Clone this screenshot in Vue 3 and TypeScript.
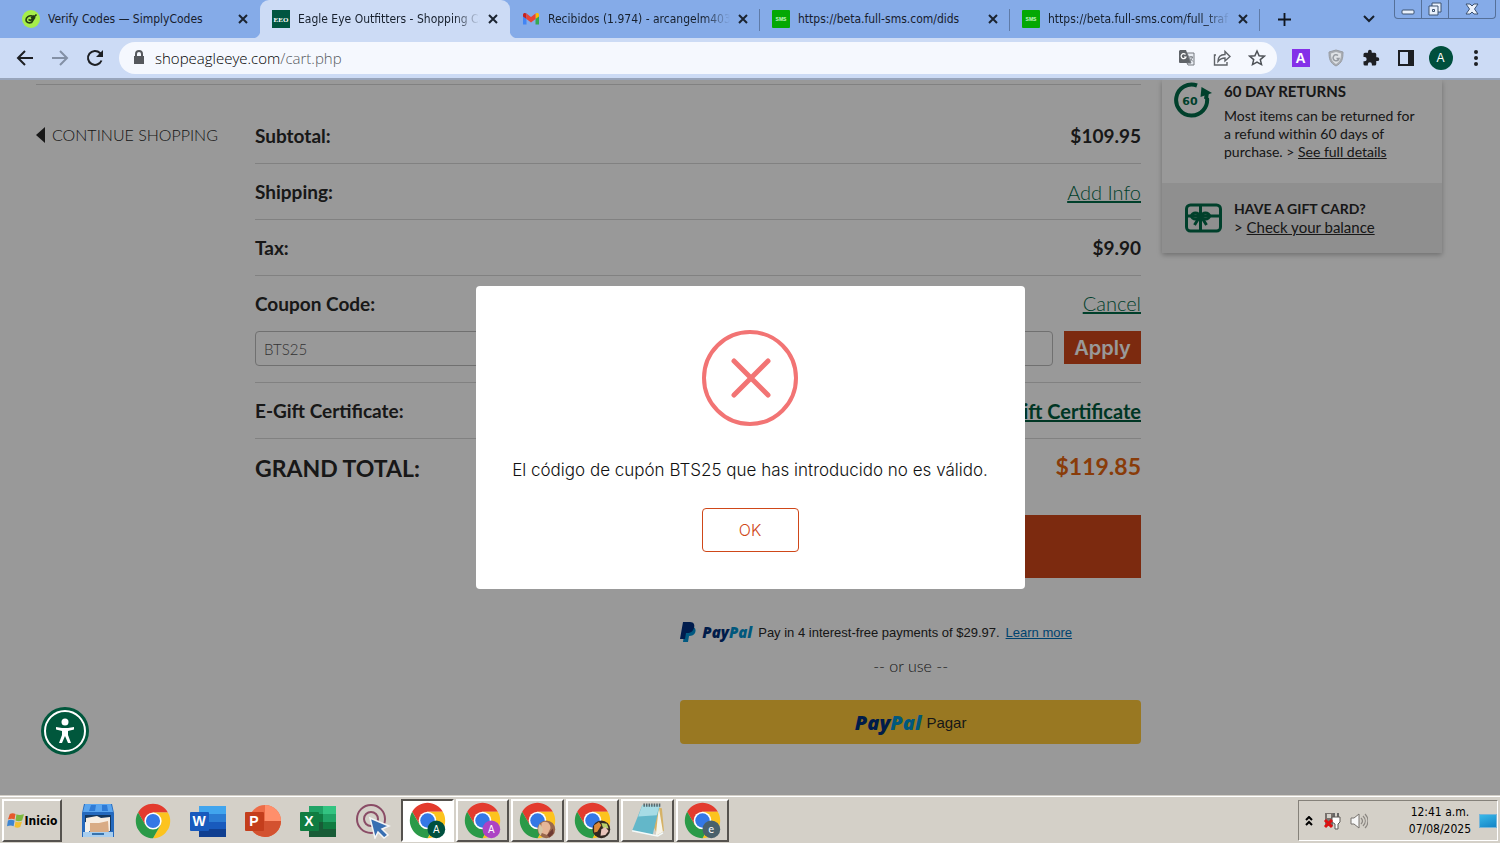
<script setup lang="ts">
import { ref } from 'vue'

interface Tab { title: string; icon: 'codes' | 'eeo' | 'gmail' | 'sms'; active?: boolean; cut?: boolean }
interface Task { name: string; badge?: string; kind: string; active?: boolean }

const tabs: Tab[] = [
  { title: 'Verify Codes — SimplyCodes', icon: 'codes' },
  { title: 'Eagle Eye Outfitters - Shopping Ca', icon: 'eeo', active: true, cut: true },
  { title: 'Recibidos (1.974) - arcangelm403', icon: 'gmail', cut: true },
  { title: 'https://beta.full-sms.com/dids', icon: 'sms' },
  { title: 'https://beta.full-sms.com/full_traf', icon: 'sms', cut: true },
]

const tasks: Task[] = [
  { name: 'Chrome A', kind: 'green', badge: 'A', active: true },
  { name: 'Chrome A 2', kind: 'purple', badge: 'A' },
  { name: 'Chrome photo', kind: 'photo' },
  { name: 'Chrome photo 2', kind: 'photo2' },
  { name: 'Notepad', kind: 'notepad' },
  { name: 'Chrome e', kind: 'slate', badge: 'e' },
]

const launchers = ['Files', 'Chrome', 'Word', 'PowerPoint', 'Excel', 'Clicker']
const coupon = ref('BTS25')
</script>

<template>
  <div class="screen">
    <header class="browser">
      <div class="tabstrip">
        <div v-for="tab in tabs" :key="tab.title" class="tab" :class="{ active: tab.active }">
          <svg v-if="tab.icon === 'codes'" class="favicon" viewBox="0 0 18 18">
            <circle cx="9" cy="9" r="9" fill="#a6ee4b" />
            <path d="M10.500 6C7 5 4 7.500 4 10s3 3.500 5.500 2.500L13 7M6.500 9.500l2 1L14.500 4.500M9 8l3-2.500" fill="none" stroke="#223b12" stroke-width="1.600" />
          </svg>
          <svg v-else-if="tab.icon === 'eeo'" class="favicon" viewBox="0 0 18 18">
            <path d="M0 0h18v18H0z" fill="#005540" />
            <text x="9" y="12" text-anchor="middle" class="eeo-text">EEO</text>
          </svg>
          <svg v-else-if="tab.icon === 'gmail'" class="favicon" viewBox="0 0 18 18">
            <path d="M1 5v9.500h3.500V8z" fill="#4285f4" />
            <path d="M17 5v9.500h-3.500V8z" fill="#34a853" />
            <path d="M1 6.500V4.500C1 3 3 2.500 4.500 3.500V9z" fill="#c5221f" />
            <path d="M17 6.500V4.500C17 3 15 2.500 13.500 3.500V9z" fill="#fbbc04" />
            <path d="M4.500 3.500 9 7l4.500-3.500V9L9 12.500 4.500 9z" fill="#ea4335" />
          </svg>
          <svg v-else class="favicon" viewBox="0 0 18 18">
            <rect width="18" height="18" rx="1" fill="#04a804" />
            <text x="9" y="11" text-anchor="middle" class="sms-text">SMS</text>
          </svg>
          <span class="tab-title" :class="{ cut: tab.cut }">{{ tab.title }}</span>
          <button class="tab-close" :aria-label="'Close ' + tab.title">
            <svg viewBox="0 0 10 10"><path d="M1 1l8 8M9 1 1 9" /></svg>
          </button>
        </div>
        <button class="new-tab" aria-label="New tab">
          <svg viewBox="0 0 14 14"><path d="M7 0v14M0 7h14" /></svg>
        </button>
        <button class="tab-search" aria-label="Search tabs">
          <svg viewBox="0 0 12 8"><path d="M1 1l5 5 5-5" /></svg>
        </button>
        <div class="window-controls">
          <button aria-label="Minimize"><svg viewBox="0 0 14 12"><rect x="1" y="7" width="12" height="4" rx="1" /></svg></button>
          <button aria-label="Restore"><svg viewBox="0 0 14 14"><path d="M4 1h9v9h-3v3H1V4h3z" /><path d="M4 4h6v6M4.500 7.500h2v2h-2z" /></svg></button>
          <button aria-label="Close window" class="wide"><svg viewBox="0 0 14 12"><path d="M1 1h4l2 2 2-2h4L9.500 6l3.500 5H9L7 9l-2 2H1l3.500-5z" /></svg></button>
        </div>
      </div>

      <div class="toolbar">
        <button class="tool" aria-label="Back"><svg viewBox="0 0 20 20"><path d="M18 10H3M10 3l-7 7 7 7" class="line" /></svg></button>
        <button class="tool faded" aria-label="Forward"><svg viewBox="0 0 20 20"><path d="M2 10h15M10 3l7 7-7 7" class="line" /></svg></button>
        <button class="tool" aria-label="Reload"><svg viewBox="0 0 20 20"><path d="M16.500 12.500A7 7 0 1 1 15 5l1 1" class="line" /><path d="M18 2v7h-7z" /></svg></button>
        <label class="omnibox">
          <svg class="lock" viewBox="0 0 12 16"><path d="M1 6h10v8H1z" /><path d="M3 7V4a3 3 0 0 1 6 0v3" class="line" /></svg>
          <span class="url">shopeagleeye.com<i>/cart.php</i></span>
          <button class="in-tool" aria-label="Translate">
            <svg viewBox="0 0 18 18"><path d="M2 1h6l5 13H2a1 1 0 0 1-1-1V2z" fill="#5f6368" /><path d="M9 4h7v12h-6l-1-2h4z" fill="#e9edf3" stroke="#74797f" /><path d="M7.500 5.500A2.500 2.500 0 1 0 8 8H6" fill="none" stroke="#fff" stroke-width="1.200" /><path d="M11 8h4M13 7v1M14.500 8c-.5 2-2 3.500-3 4M12 9.500l3 3" fill="none" stroke="#74797f" /></svg>
          </button>
          <button class="in-tool" aria-label="Share">
            <svg viewBox="0 0 18 18"><path d="M3 6H1.500v10H14v-3M5 12.500c0-5 3-7 7-7V2.500l5 5-5 4.500V9c-3 0-5 1-7 3.500z" fill="none" stroke="#5f6368" stroke-width="1.400" /></svg>
          </button>
          <button class="in-tool" aria-label="Bookmark">
            <svg viewBox="0 0 18 18"><path d="M9 2l2.100 4.700 5.100.5-3.900 3.400 1.200 5L9 13l-4.500 2.600 1.200-5L1.800 7.200l5.100-.5z" fill="none" stroke="#4d5156" stroke-width="1.500" /></svg>
          </button>
        </label>
        <button class="tool ext" aria-label="Extension A"><span class="a-ext">A</span></button>
        <button class="tool ext" aria-label="Shield"><svg viewBox="0 0 18 18"><path d="M9 1l7 2c0 7-1 11-7 14C3 14 2 10 2 3z" fill="#a9adb3" stroke="#989ca3" /><path d="M9 3l5 1.500c0 5-1 8-5 10.500-4-2.500-5-5.500-5-10.500z" fill="#dfe2e6" /><path d="M11 6.500a3 3 0 1 0 1 3H9.500" fill="none" stroke="#969ba2" stroke-width="1.500" /></svg></button>
        <button class="tool ext" aria-label="Extensions"><svg viewBox="0 0 24 24"><path d="M20.500 11H19V7a2 2 0 0 0-2-2h-4V3.500a2.500 2.500 0 0 0-5 0V5H4a2 2 0 0 0-2 2v3.800h1.500a2.700 2.700 0 0 1 0 5.400H2V20a2 2 0 0 0 2 2h3.800v-1.500a2.700 2.700 0 0 1 5.400 0V22H17a2 2 0 0 0 2-2v-4h1.500a2.500 2.500 0 0 0 0-5z" /></svg></button>
        <button class="tool ext" aria-label="Side panel"><svg viewBox="0 0 18 18"><path d="M1 1h16v16H1zM3 3v12h8V3z" fill-rule="evenodd" /></svg></button>
        <button class="tool ext" aria-label="Profile"><span class="avatar">A</span></button>
        <button class="tool ext" aria-label="Menu"><svg viewBox="0 0 18 18"><circle cx="9" cy="3" r="2" /><circle cx="9" cy="9" r="2" /><circle cx="9" cy="15" r="2" /></svg></button>
      </div>
    </header>

    <main class="page">
      <div class="cart">
        <div class="cart-main">
          <div class="continue">
            <a href="#"><svg viewBox="0 0 9 16"><path d="M9 0v16L0 8z" /></svg>CONTINUE SHOPPING</a>
          </div>
          <div class="totals">
            <div class="row"><b>Subtotal:</b><b>$109.95</b></div>
            <div class="row"><b>Shipping:</b><a href="#">Add Info</a></div>
            <div class="row"><b>Tax:</b><b>$9.90</b></div>
            <div class="row coupon">
              <div class="coupon-head"><label for="coupon"><b>Coupon Code:</b></label><a href="#">Cancel</a></div>
              <div class="coupon-form"><input id="coupon" v-model="coupon" type="text" /><button>Apply</button></div>
            </div>
            <div class="row"><b>E-Gift Certificate:</b><a href="#" class="strong">Add E-Gift Certificate</a></div>
            <div class="grand"><b>GRAND TOTAL:</b><b class="amount">$119.85</b></div>
            <div class="pay">
              <button class="checkout" aria-label="Checkout"></button>
              <p class="pay-later">
                <svg viewBox="0 0 16 20"><path d="M5 5h8c3 1 3 4 2 6s-3 3-6 3l-1 6H3z" fill="#0094d8" /><path d="M3 0h7c4 0 5 3 4 6s-3 5-7 5H6l-1 6H0z" fill="#002f80" /></svg>
                <span class="paypal small">Pay<i>Pal</i></span>
                <span>Pay in 4 interest-free payments of $29.97.</span>
                <a href="#">Learn more</a>
              </p>
              <p class="or">-- or use --</p>
              <button class="paypal-button"><span class="paypal">Pay<i>Pal</i></span><span>Pagar</span></button>
            </div>
          </div>
        </div>
        <aside class="card">
          <section class="returns">
            <svg viewBox="0 0 38 38">
              <path d="M23 5.500A15.500 15.500 0 1 0 33 18" fill="none" stroke="#006b49" stroke-width="4" />
              <path d="M26.500 17l1-10 10.500 6z" fill="#006b49" />
              <path d="M32 19l1-7" stroke="#006b49" stroke-width="4" />
              <text x="16" y="25" text-anchor="middle" class="sixty">60</text>
            </svg>
            <div>
              <h2>60 DAY RETURNS</h2>
              <p>Most items can be returned for a refund within 60 days of purchase. &gt; <a href="#">See full details</a></p>
            </div>
          </section>
          <section class="gift">
            <svg viewBox="0 0 38 30" fill="none" stroke="#006b49" stroke-width="3">
              <rect x="2" y="2" width="34" height="26" rx="4" />
              <path d="M2 13h34M16 2v26" />
              <ellipse cx="11" cy="13" rx="4" ry="3" /><ellipse cx="21" cy="13" rx="4" ry="3" />
              <path d="M15 14l-5 8M17 14l5 8" />
            </svg>
            <div>
              <h2>HAVE A GIFT CARD?</h2>
              <p>&gt; <a href="#">Check your balance</a></p>
            </div>
          </section>
        </aside>
      </div>

      <div class="overlay">
        <div class="modal" role="alertdialog" aria-labelledby="message">
          <svg class="error" viewBox="0 0 98 98"><circle cx="49" cy="49" r="46" /><path d="M33 32l34 34M67 32 33 66" /></svg>
          <p id="message">El código de cupón BTS25 que has introducido no es válido.</p>
          <button>OK</button>
        </div>
      </div>

      <button class="access" aria-label="Accessibility">
        <svg viewBox="0 0 48 48"><circle cx="24" cy="24" r="24" fill="#00573c" /><circle cx="24" cy="24" r="20" fill="none" stroke="#fff" stroke-width="2" /><circle cx="24" cy="15" r="3.500" fill="#fff" /><path d="M15 20l6 1h6l6-1v2.500l-6 1.500v4l3 8h-3l-3-7-3 7h-3l3-8v-4l-6-1.500z" fill="#fff" /></svg>
      </button>
    </main>

    <footer class="taskbar">
      <button class="start">
        <svg viewBox="0 0 18 18"><path d="M3 2c2-1 4-1 6 0L8 8C6 7 4 7 1 8z" fill="#e5592b" /><path d="M10 2.500c2 1 4 1 8 0L16 9c-2 1-5 1-7 0z" fill="#7cb83e" /><path d="M1 9c2-1 4-1 7 0l-1 6c-2-1-4-1-7 0z" fill="#3d85d2" /><path d="M9 10c2 1 4 1 7 0l-2 6c-2 1-4 1-6 0z" fill="#f2bf32" /></svg>
        Inicio
      </button>
      <nav class="launch">
        <button v-for="app in launchers" :key="app" :aria-label="app">
          <svg v-if="app === 'Files'" viewBox="0 0 36 36"><path d="M4 1h28l2 9v24H2V10z" fill="#2569bd" /><path d="M5 1h26l2 8H3z" fill="#5aa5ef" /><path d="M11 2h5l-1 6H9zM22 2h5l1 6h-6z" fill="#2f7bd6" /><path d="M5 12h26v16H5z" fill="#14375f" /><path d="M6 15l11-2 4 2 9-1v14H6z" fill="#f7eee3" /><path d="M10 20l9 0 9-2 1 13H10z" fill="#d9ac85" /><path d="M5 19l5 1-1 9H5z" fill="#f3f0ea" /><path d="M3 29h30v5H3z" fill="#a8ceef" /><path d="M12 31h12" stroke="#3873ac" stroke-width="2" /></svg>
          <svg v-else-if="app === 'Chrome'" viewBox="1 1 46 46"><path d="M4.950 13A22 22 0 0 1 43.050 13H24L14.500 29.500z" fill="#e33b2e" /><path d="M43.050 13A22 22 0 0 1 24 46L33.500 29.500 24 13z" fill="#fcc31e" /><path d="M24 46A22 22 0 0 1 4.950 13L14.500 29.500h19z" fill="#2b9a48" /><circle cx="24" cy="24" r="11" fill="#fff" /><circle cx="24" cy="24" r="9" fill="#3478e5" /></svg>
          <svg v-else-if="app === 'Word'" viewBox="0 0 36 36"><path d="M9 3h27v8H9z" fill="#41a5ee" /><path d="M9 11h27v8H9z" fill="#2b7cd3" /><path d="M9 19h27v7H9z" fill="#185abd" /><path d="M9 26h27v8H9z" fill="#103f91" /><rect y="9" width="19" height="19" rx="1" fill="#185abd" /><text x="9" y="23" text-anchor="middle" class="office">W</text></svg>
          <svg v-else-if="app === 'PowerPoint'" viewBox="0 0 36 36"><circle cx="20" cy="18" r="16" fill="#ed6c47" /><path d="M20 2a16 16 0 0 1 16 16H20z" fill="#ff8f6b" /><path d="M4 18h32a16 16 0 0 1-32 0z" fill="#d35230" /><rect y="9" width="19" height="19" rx="1" fill="#c43e1c" /><text x="9" y="23" text-anchor="middle" class="office">P</text></svg>
          <svg v-else-if="app === 'Excel'" viewBox="0 0 36 36"><path d="M9 3h14v8H9z" fill="#21a366" /><path d="M23 3h13v8H23z" fill="#33c481" /><path d="M9 11h14v8H9z" fill="#107c41" /><path d="M23 11h13v8H23z" fill="#21a366" /><path d="M9 19h27v15H9z" fill="#185c37" /><path d="M23 19h13v7H23z" fill="#107c41" /><rect y="9" width="19" height="19" rx="1" fill="#107c41" /><text x="9" y="23" text-anchor="middle" class="office">X</text></svg>
          <svg v-else viewBox="0 0 36 36"><circle cx="16" cy="16" r="14" fill="none" stroke="#8a4c66" stroke-width="2" /><circle cx="16" cy="16" r="7" fill="none" stroke="#8a4c66" stroke-width="2" /><path d="M15 15l19 8-7 3 6 6-4 3-6-6-3 6z" fill="#386fb2" stroke="#f5f5f5" stroke-width="1.500" /></svg>
        </button>
      </nav>
      <div class="tasks">
        <button v-for="task in tasks" :key="task.name" :class="{ active: task.active }" :aria-label="task.name">
          <svg v-if="task.kind === 'notepad'" viewBox="0 0 36 36"><path d="M13 3l19 3 2 22-6 4z" fill="#d6b266" /><path d="M29 5l4 24-7 4z" fill="#f7f4ea" /><path d="M13 3h17l-7 29L3 28z" fill="#63b7c9" /><path d="M13 3h17l-3 10-18 1z" fill="#a7dce5" /><path d="M3 28l20 4 5 1 5-3" fill="none" stroke="#f4fafa" stroke-width="1.500" /><path d="M14 3h17" stroke="#54666c" stroke-width="3" stroke-dasharray="1.500 1" /></svg>
          <svg v-else viewBox="1 1 46 46">
            <path d="M4.950 13A22 22 0 0 1 43.050 13H24L14.500 29.500z" fill="#e33b2e" /><path d="M43.050 13A22 22 0 0 1 24 46L33.500 29.500 24 13z" fill="#fcc31e" /><path d="M24 46A22 22 0 0 1 4.950 13L14.500 29.500h19z" fill="#2b9a48" /><circle cx="24" cy="24" r="11" fill="#fff" /><circle cx="24" cy="24" r="9" fill="#3478e5" />
            <g v-if="task.kind === 'photo'"><circle cx="35" cy="35" r="11" fill="#99684d" /><path d="M29 27c5-4 12 0 11 7l-4 8-8-3z" fill="#e5b698" /><path d="M27 28c-3 5-3 10 1 15l3-8z" fill="#d7c5a4" /><path d="M36 42l7-8 1 6-5 5z" fill="#6e3b34" /></g>
            <g v-else-if="task.kind === 'photo2'"><circle cx="35" cy="35" r="11" fill="#322821" /><path d="M26 30l6-4 3 4-5 8-4 1z" fill="#dc8a3b" /><path d="M35 27l7 1 2 6-7-1z" fill="#b9d06b" /><path d="M35 35l5-3 4 5-4 5-6 1z" fill="#e8c4ba" /></g>
            <g v-else><circle cx="35" cy="35" r="11" :class="task.kind" /><text x="35" y="39" text-anchor="middle" class="badge">{{ task.badge }}</text></g>
          </svg>
        </button>
      </div>
      <div class="tray">
        <svg class="more" viewBox="0 0 8 10"><path d="M1 4l3-3 3 3M1 9l3-3 3 3" /></svg>
        <svg class="tray-icon" viewBox="0 0 18 18"><path d="M2 1h8v13H2z" fill="#77716c" /><path d="M4 2h4v4H4z" fill="#d5d1ca" /><path d="M11 1v4M15 1v4" stroke="#666" stroke-width="2" /><path d="M9 5h8v5l-2 2v5h-3v-5L9 10z" fill="#fff" stroke="#5d5955" /><path d="M2 8l7 7M9 8l-7 7" stroke="#dc1111" stroke-width="3" /></svg>
        <svg class="tray-icon" viewBox="0 0 18 18"><path d="M1 6h3l5-4v14l-5-4H1z" fill="#f7f7f7" stroke="#77736e" /><path d="M11 6c2 2 2 4 0 6M13 4c3 3 3 7 0 10M15 2c4 4 4 10 0 14" fill="none" stroke="#8b8782" stroke-width="1.200" /></svg>
        <div class="clock"><span>12:41 a.m.</span><span>07/08/2025</span></div>
        <button class="show-desktop" aria-label="Show desktop"></button>
      </div>
    </footer>
  </div>
</template>

<style>
body {
  margin: 0;
}
</style>

<style scoped>
* {
  box-sizing: border-box;
}
button {
  margin: 0;
  padding: 0;
  border: 0;
  background: none;
  font: inherit;
  color: inherit;
}
svg {
  display: block;
  flex: none;
}
p, h2 {
  margin: 0;
}
.screen {
  display: flex;
  flex-direction: column;
  min-height: 100vh;
  font-family: Lato, "Liberation Sans", sans-serif;
  color: #282828;
}

/* Browser */
.browser {
  font-family: "DejaVu Sans Condensed", "DejaVu Sans", sans-serif;
  color: #17202d;
}
.tabstrip {
  display: flex;
  height: 38px;
  padding-left: 10px;
  background: #85abe8;
}
.tab {
  position: relative;
  display: flex;
  align-items: center;
  flex: 0 1 250px;
  min-width: 0;
  padding: 0 12px;
}
.tab::after {
  content: "";
  position: absolute;
  right: 0;
  top: 9px;
  height: 22px;
  width: 1px;
  background: #5f7ba8;
}
.tab:first-child::after, .tab.active::after {
  display: none;
}
.tab.active {
  background: #ccdbf5;
  border-radius: 9px 9px 0 0;
}
.tab:first-child {
  background: radial-gradient(circle at 0 0, transparent 8px, #ccdbf5 9px) right bottom / 8px 8px no-repeat;
}
.tab.active + .tab {
  background: radial-gradient(circle at 100% 0, transparent 8px, #ccdbf5 9px) left bottom / 8px 8px no-repeat;
}
.favicon {
  width: 18px;
  height: 18px;
}
.eeo-text {
  font: bold 7px "Liberation Serif", serif;
  fill: #fff;
}
.sms-text {
  font: bold 5px "Liberation Sans", sans-serif;
  fill: #c8f5c8;
}
.tab-title {
  flex: 1;
  min-width: 0;
  margin: 0 8px;
  overflow: hidden;
  white-space: nowrap;
  font-size: 12px;
  line-height: 20px;
}
.tab-title.cut {
  mask-image: linear-gradient(to right, #000 calc(100% - 26px), transparent);
}
.tab-close {
  width: 10px;
  height: 10px;
}
.tab-close svg {
  width: 10px;
  height: 10px;
  stroke: #1b2430;
  stroke-width: 2;
}
.new-tab {
  width: 48px;
  display: grid;
  place-items: center;
}
.new-tab svg {
  width: 13px;
  stroke: #10161f;
  stroke-width: 2;
}
.tab-search {
  margin-left: auto;
  width: 50px;
  display: grid;
  place-items: center;
}
.tab-search svg {
  width: 12px;
  fill: none;
  stroke: #17202d;
  stroke-width: 2;
}
.window-controls {
  display: flex;
  height: 19px;
  margin-right: 4px;
  border: 1px solid #557099;
  border-top: 0;
  border-radius: 0 0 4px 4px;
}
.window-controls button {
  width: 27px;
  display: grid;
  place-items: center;
  border-right: 1px solid #557099;
}
.window-controls button.wide {
  width: 46px;
  border: 0;
}
.window-controls svg {
  width: 14px;
  fill: #e9f1fc;
  stroke: #3d5270;
}
.toolbar {
  display: flex;
  align-items: center;
  height: 42px;
  padding: 0 7px;
  background: #ccdbf5;
  border-bottom: 2px solid #98a5bb;
}
.tool {
  display: grid;
  place-items: center;
  width: 35px;
  height: 32px;
}
.tool svg {
  width: 20px;
  height: 20px;
  fill: #1d1f23;
}
.tool.ext svg {
  width: 18px;
  height: 18px;
}
.line {
  fill: none;
  stroke: #1d1f23;
  stroke-width: 2;
}
.faded .line {
  stroke: #8390a5;
}
.omnibox {
  display: flex;
  align-items: center;
  flex: 1;
  height: 32px;
  margin: 0 6px 0 7px;
  padding: 0 3px 0 14px;
  border-radius: 16px;
  background: #f5f8fe;
}
.lock {
  width: 12px;
  height: 16px;
  fill: #55585d;
}
.lock .line {
  stroke: #55585d;
}
.url {
  flex: 1;
  margin-left: 10px;
  font-family: "Open Sans", sans-serif;
  font-size: 15px;
  font-weight: 300;
  color: #000;
}
.url i {
  font-style: normal;
  color: #565a61;
}
.in-tool {
  display: grid;
  place-items: center;
  width: 35px;
}
.in-tool svg {
  width: 18px;
  height: 18px;
}
.a-ext {
  width: 18px;
  background: #8430e8;
  color: #fff;
  font: bold 14px/18px "Liberation Sans", sans-serif;
}
.avatar {
  width: 24px;
  border-radius: 50%;
  background: #004f3d;
  color: #fff;
  font: 12px/24px "Liberation Sans", sans-serif;
}

/* Shop page */
.page {
  position: relative;
  flex: 1;
  background: #fff;
}
.cart {
  display: grid;
  grid-template-columns: minmax(0, 1fr) 280px;
  gap: 21px;
  align-items: start;
  padding: 0 58px 0 36px;
}
.cart a {
  color: inherit;
}
.cart-main {
  display: grid;
  grid-template-columns: 219px minmax(0, 1fr);
  margin-top: 4px;
  padding-top: 23px;
  border-top: 1px solid #d8d8d8;
}
.continue a {
  display: flex;
  align-items: center;
  gap: 7px;
  line-height: 54px;
  font-size: 16px;
  font-weight: 300;
  text-decoration: none;
}
.continue svg {
  width: 9px;
  height: 16px;
  fill: #282828;
}
.row {
  display: flex;
  justify-content: space-between;
  align-items: center;
  height: 56px;
  border-bottom: 1px solid #d8d8d8;
  font-size: 19px;
}
.row a, .cart .row a {
  font-size: 20px;
  font-weight: 300;
  color: #006b49;
}
.row.coupon {
  flex-direction: column;
  align-items: stretch;
  justify-content: flex-start;
  height: 107px;
}
.coupon-head {
  display: flex;
  justify-content: space-between;
  line-height: 55px;
}
.coupon-form {
  display: flex;
  gap: 11px;
}
.coupon-form input {
  flex: 1;
  min-width: 0;
  height: 35px;
  padding: 0 8px;
  border: 1px solid #bbb;
  border-radius: 4px;
  background: #fff;
  color: #555;
  font: 300 15px Lato, sans-serif;
}
.coupon-form button {
  width: 77px;
  height: 33px;
  background: #cf4719;
  color: #fff;
  font: 600 20px Inter, sans-serif;
}
.row .strong, .cart .row .strong {
  font-weight: 700;
  color: #005a3c;
}
.grand {
  display: flex;
  justify-content: space-between;
  height: 76px;
  line-height: 58px;
  font-size: 23px;
}
.amount {
  line-height: 54px;
  color: #e5650f;
}
.pay {
  width: 52%;
  margin-left: auto;
}
.checkout {
  display: block;
  width: 100%;
  height: 63px;
  background: #cf4719;
}
.pay-later {
  display: flex;
  align-items: center;
  gap: 6px;
  height: 34px;
  margin-top: 37px;
  font: 13px "Liberation Sans", sans-serif;
  white-space: nowrap;
}
.pay-later svg {
  width: 16px;
  height: 20px;
}
.cart .pay-later a {
  color: #0070ba;
}
.paypal {
  font: italic 800 20px "Open Sans", sans-serif;
  color: #00307c;
}
.paypal i {
  color: #0093d0;
}
.paypal.small {
  font-size: 15px;
}
.or {
  line-height: 34px;
  text-align: center;
  font-size: 16px;
  font-weight: 300;
}
.paypal-button {
  display: flex;
  align-items: center;
  justify-content: center;
  gap: 5px;
  width: 100%;
  height: 44px;
  margin-top: 17px;
  border-radius: 4px;
  background: #ffc939;
  font: 15px "Liberation Sans", sans-serif;
}
.card {
  box-shadow: 0 2px 5px #bbb;
  font-size: 14px;
  line-height: 18px;
}
.card h2 {
  font-size: 15px;
  line-height: 22px;
}
.returns {
  display: flex;
  gap: 12px;
  height: 103px;
  padding: 0 20px 0 12px;
}
.returns svg {
  width: 38px;
  height: 38px;
}
.returns p {
  margin-top: 5px;
}
.sixty {
  font: bold 11px "DejaVu Sans", sans-serif;
  fill: #006b49;
}
.gift {
  display: flex;
  align-items: center;
  gap: 11px;
  height: 70px;
  padding: 0 22px;
  background: #eee;
}
.gift svg {
  width: 39px;
  height: 30px;
}
.gift h2 {
  font-size: 14px;
  line-height: 18px;
}
.gift p {
  font-size: 15px;
}
.overlay {
  position: absolute;
  inset: 0;
  display: grid;
  place-items: center;
  background: rgba(0, 0, 0, 0.4);
}
.modal {
  display: flex;
  flex-direction: column;
  align-items: center;
  width: 549px;
  max-width: 90%;
  padding: 43px 16px 37px;
  border-radius: 4px;
  background: #fff;
}
.error {
  width: 98px;
  height: 98px;
  fill: none;
  stroke: #f27474;
  stroke-width: 4;
  stroke-linecap: round;
}
.error path {
  stroke-width: 5;
}
.modal p {
  margin: 30px 0 24px;
  font: 300 17px/27px Inter, sans-serif;
  color: #111;
  white-space: nowrap;
}
.modal button {
  width: 97px;
  height: 44px;
  border: 1px solid #cf4719;
  border-radius: 4px;
  color: #cf4719;
  font: 300 16px Inter, sans-serif;
}
.access {
  position: absolute;
  left: 41px;
  bottom: 40px;
}
.access svg {
  width: 48px;
  height: 48px;
}

/* Taskbar */
.taskbar {
  display: flex;
  align-items: center;
  height: 48px;
  padding: 2px 2px 0;
  background: #d4d0c8;
  border-top: 1px solid #d4d0c8;
  box-shadow: inset 0 1px #fff;
}
.start {
  display: flex;
  align-items: center;
  justify-content: center;
  gap: 1px;
  width: 60px;
  height: 43px;
  border: 2px solid;
  border-color: #fff #55524e #55524e #fff;
  font: bold 12px "DejaVu Sans Condensed", sans-serif;
  color: #000;
}
.start svg {
  width: 17px;
  height: 17px;
}
.launch {
  display: flex;
  margin: 0 0 0 8px;
}
.launch button {
  display: grid;
  place-items: center;
  width: 55px;
}
.launch svg {
  width: 36px;
  height: 36px;
}
.office {
  font: bold 14px "Liberation Sans", sans-serif;
  fill: #fff;
}
.tasks {
  display: flex;
  gap: 2px;
  margin-left: 1px;
}
.tasks button {
  display: grid;
  place-items: center;
  width: 53px;
  height: 43px;
  border: 2px solid;
  border-color: #fff #55524e #55524e #fff;
}
.tasks button.active {
  background: #fff;
  border-color: #55524e #fff #fff #55524e;
}
.tasks svg {
  width: 37px;
  height: 37px;
}
.badge {
  font: 12px "DejaVu Sans", sans-serif;
  fill: #fff;
}
.green {
  fill: #00503f;
}
.purple {
  fill: #ac43c4;
}
.slate {
  fill: #49616c;
}
.tray {
  display: flex;
  align-items: center;
  width: 200px;
  height: 41px;
  margin-left: auto;
  padding-left: 6px;
  border: 1px solid;
  border-color: #85817a #fff #fff #85817a;
}
.more {
  width: 8px;
  height: 10px;
  margin-right: 10px;
  fill: none;
  stroke: #000;
  stroke-width: 2;
}
.tray-icon {
  width: 18px;
  height: 18px;
  margin-right: 9px;
}
.clock {
  display: flex;
  flex-direction: column;
  align-items: center;
  margin-left: auto;
  font: 12px/17px "DejaVu Sans Condensed", sans-serif;
  color: #000;
}
.show-desktop {
  width: 18px;
  height: 14px;
  margin-left: 8px;
  border: 1px solid #77b5d8;
  background: linear-gradient(160deg, #38b8e8, #1484c6);
}
</style>
